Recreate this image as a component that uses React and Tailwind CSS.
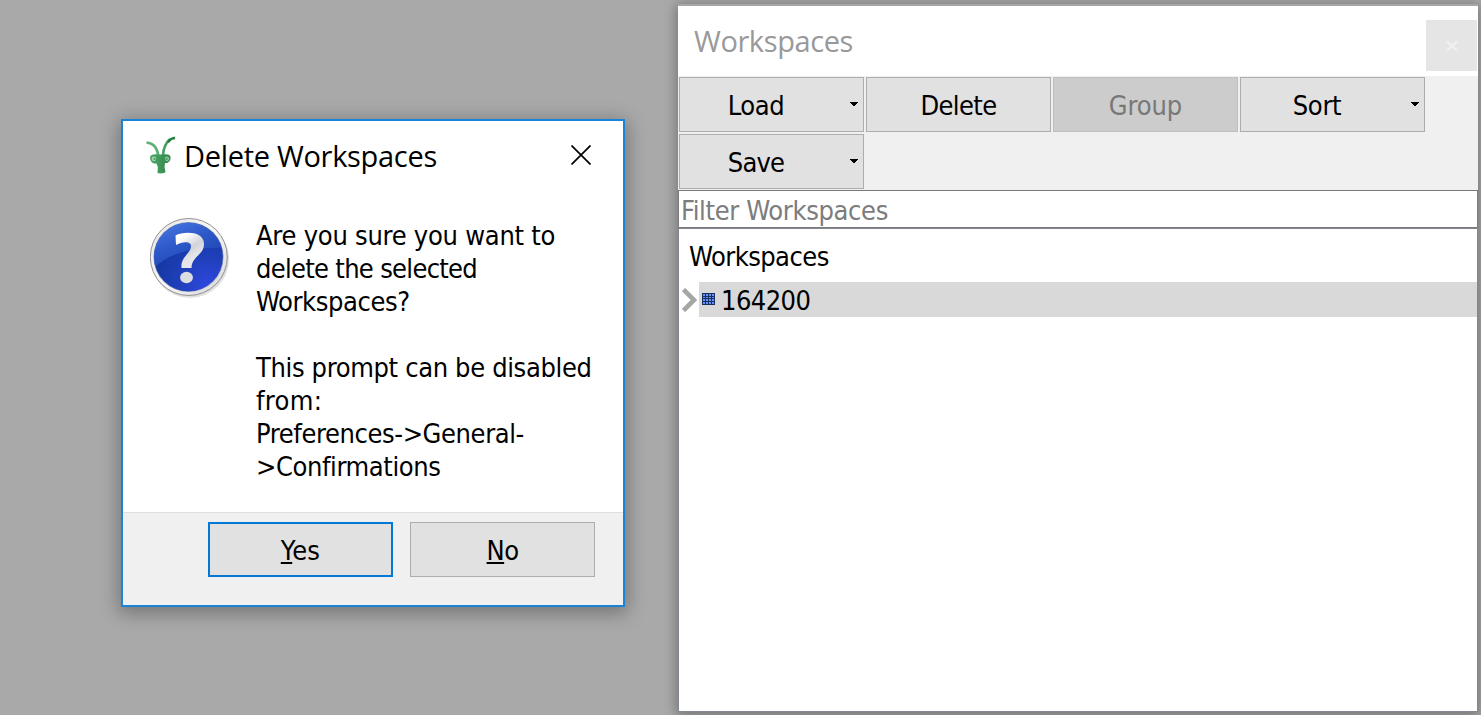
function MantisLogo() {
  return (
    <svg width="30" height="38" viewBox="0 0 30 38" className="shrink-0">
      <defs>
        <linearGradient id="mantis" x1="0" y1="0" x2="1" y2="0">
          <stop offset="0" stopColor="#4fa866" />
          <stop offset="1" stopColor="#2f8549" />
        </linearGradient>
      </defs>
      <path d="M0.500 6.500C7 7 11 11.500 12.300 19" fill="none" stroke="#5bb076" strokeWidth="2.600" />
      <path d="M17 19C17.500 12 19.500 7 24 3" fill="none" stroke="#47a060" strokeWidth="2.600" />
      <path d="M21 6C23 2.300 26.500 0 29.300 0.800L28.500 3.700C26.500 3 25 4.200 23 7Z" fill="#1f7a3b" />
      <path
        d="M4 21C5 18 9 18 12 18.500H17C20 18 24 18 24.500 21C25 25 22 27.500 19 27L18.500 31L19.500 36C17 38 13 37.500 11.500 37L11.800 31L10.500 27.500C7 28 4 26 4 21Z"
        fill="url(#mantis)"
      />
      <ellipse cx="8" cy="22.800" rx="2.300" ry="2.400" fill="#a3d2af" />
      <ellipse cx="21" cy="22.800" rx="2.200" ry="2.400" fill="#8fc59e" />
      <circle cx="8.600" cy="23" r="1" fill="#3f9459" />
      <circle cx="20.600" cy="23" r="1" fill="#3f9459" />
    </svg>
  );
}

function QuestionIcon() {
  return (
    <svg width="80" height="82" viewBox="0 0 80 82" className="shrink-0">
      <defs>
        <linearGradient id="ring" x1="0" y1="0" x2="1" y2="1">
          <stop offset="0" stopColor="#e4e4e4" />
          <stop offset="0.5" stopColor="#f8f8f8" />
          <stop offset="1" stopColor="#d4d4d6" />
        </linearGradient>
        <radialGradient id="ball" cx="0.8" cy="0.95" r="0.95">
          <stop offset="0" stopColor="#3048e0" />
          <stop offset="0.45" stopColor="#2040bc" />
          <stop offset="1" stopColor="#12359a" />
        </radialGradient>
        <linearGradient id="gloss" x1="0.05" y1="0" x2="0.6" y2="1">
          <stop offset="0" stopColor="#6094ff" />
          <stop offset="0.5" stopColor="#3361d2" />
          <stop offset="1" stopColor="#1a40a8" />
        </linearGradient>
        <linearGradient id="mark" x1="0" y1="0" x2="0.5" y2="1">
          <stop offset="0.2" stopColor="#ffffff" />
          <stop offset="0.55" stopColor="#d2d2da" />
          <stop offset="0.8" stopColor="#e6e6ea" />
        </linearGradient>
        <clipPath id="ballClip">
          <circle cx="38.500" cy="39" r="34.500" />
        </clipPath>
      </defs>
      <circle cx="40" cy="41" r="39" fill="#000" opacity="0.12" />
      <circle cx="38.800" cy="39" r="38.500" fill="url(#ring)" stroke="#929292" strokeWidth="1" />
      <circle cx="38.500" cy="39" r="35" fill="#8492b8" />
      <circle cx="38.500" cy="39" r="34.300" fill="url(#ball)" />
      <path d="M0 55C12 38 38 28 76 30V0H0Z" fill="url(#gloss)" opacity="0.8" clipPath="url(#ballClip)" />
      <path
        d="M25.500 17.500C33 13.500 54 12.500 54 26C54 37 41.500 38.500 41.500 50H31.500C30.500 38 41 36 41 28C41 22.500 32 23.500 26 27Z"
        fill="url(#mark)"
      />
      <ellipse cx="36.500" cy="59.500" rx="6.400" ry="5.800" fill="#dcdce2" />
    </svg>
  );
}

function ToolButton({ label, menu, disabled, track }) {
  return (
    <div
      className={
        "flex h-[55px] w-[185px] items-center border " +
        (disabled
          ? "border-[#bfbfbf] bg-[#cccccc] text-[#787878]"
          : "border-[#adadad] bg-[#e1e1e1] text-black")
      }
    >
      <span className={"grow pt-[3px] text-center " + track}>{label}</span>
      {menu && (
        <span className="flex w-[31px] shrink-0 justify-center pl-[13px]">
          <svg width="8" height="5" viewBox="0 0 8 5" shapeRendering="crispEdges">
            <path d="M0 0H8V1H7V2H6V3H5V4H3V3H2V2H1V1H0Z" />
          </svg>
        </span>
      )}
    </div>
  );
}

function WorkspacesPanel() {
  return (
    <section className="absolute left-[678px] top-1 flex h-[708px] w-[800px] flex-col border-t-2 border-[#a6a6a6] bg-white shadow-[0_2px_12px_2px_rgba(0,0,0,0.3)]">
      <header className="flex h-[70px] shrink-0 items-start justify-between pl-4 pr-px">
        <h2 className="pt-[14px] font-['Open_Sans',sans-serif] text-[29px] leading-[42px] tracking-[-0.4px] text-[#999999]">
          Workspaces
        </h2>
        <div className="mt-[14px] flex size-[51px] items-center justify-center bg-[#e5e5e5]">
          <svg width="12" height="10" viewBox="0 0 12 10">
            <path d="M1 0.500L11 9.500M11 0.500L1 9.500" stroke="#f0f0f0" strokeWidth="2.400" />
          </svg>
        </div>
      </header>
      <div className="flex h-[114px] shrink-0 flex-wrap content-start gap-0.5 bg-[#f0f0f0] pl-px pt-px">
        <ToolButton label="Load" menu track="tracking-[-0.4px]" />
        <ToolButton label="Delete" track="tracking-[-0.6px]" />
        <ToolButton label="Group" disabled track="tracking-[-0.1px]" />
        <ToolButton label="Sort" menu track="tracking-[-0.3px]" />
        <ToolButton label="Save" menu track="tracking-[-0.8px]" />
      </div>
      <div className="h-[38px] shrink-0 border border-[#7a7a7a] pl-0.5 leading-[39px] tracking-[-0.35px] text-[#7c7c7c]">
        Filter Workspaces
      </div>
      <div className="grow border border-[#828790]">
        <div className="h-[53px] pl-[10px] pt-[9px] leading-[37px] tracking-[-0.55px]">Workspaces</div>
        <div className="flex h-[35px] items-stretch">
          <div className="flex w-5 items-center pl-[3px]">
            <svg width="15" height="24" viewBox="0 0 15 24">
              <path d="M1.500 1.500L12 12L1.500 22.500" fill="none" stroke="#a6a6a6" strokeWidth="4.600" />
            </svg>
          </div>
          <div className="flex grow items-center bg-[#d9d9d9] pl-[3px]">
            <svg width="13" height="12" viewBox="0 0 13 12" shapeRendering="crispEdges" className="mb-0.5">
              <rect width="13" height="12" fill="#17305c" />
              <path d="M1 1h2v2h-2zM4 1h2v2h-2zM7 1h2v2h-2zM10 1h2v2h-2zM1 4h2v1h-2zM4 4h2v1h-2zM7 4h2v1h-2zM10 4h2v1h-2zM1 6h2v2h-2zM4 6h2v2h-2zM7 6h2v2h-2zM10 6h2v2h-2zM1 9h2v2h-2zM4 9h2v2h-2zM7 9h2v2h-2zM10 9h2v2h-2z" fill="#6a90fa" />
            </svg>
            <span className="pl-1.5 pt-[3px] tracking-[-0.55px]">164200</span>
          </div>
        </div>
      </div>
    </section>
  );
}

function DeleteDialog() {
  return (
    <section className="absolute left-[121px] top-[119px] flex h-[488px] w-[504px] flex-col border-2 border-[#1883d7] bg-white shadow-[0_4px_18px_2px_rgba(0,0,0,0.32)]">
      <header className="flex h-[70px] shrink-0 items-center pl-[23px] pr-8">
        <div className="pb-0.5">
          <MantisLogo />
        </div>
        <h1 className="grow pl-2 font-['Open_Sans',sans-serif] text-[29px] leading-[42px] tracking-[-0.3px] text-black">
          Delete Workspaces
        </h1>
        <svg width="20" height="20" viewBox="0 0 20 20" fill="none" stroke="#000" strokeWidth="1.700" className="mb-0.5">
          <path d="M0.500 0.500L19.500 19.500M19.500 0.500L0.500 19.500" />
        </svg>
      </header>
      <div className="flex grow items-start pl-[27px] pt-[27px]">
        <QuestionIcon />
        <div className="flex flex-col whitespace-nowrap pl-[26px] pt-px leading-[33px]">
          <span className="tracking-[-0.25px]">Are you sure you want to</span>
          <span className="tracking-[-0.7px]">delete the selected</span>
          <span className="tracking-[-0.4px]">Workspaces?</span>
          <span className="h-[33px]" />
          <span className="tracking-[-0.35px]">This prompt can be disabled</span>
          <span className="tracking-[0.3px]">from:</span>
          <span className="tracking-[-0.4px]">Preferences-&gt;General-</span>
          <span className="tracking-[-0.4px]">&gt;Confirmations</span>
        </div>
      </div>
      <footer className="flex h-[93px] shrink-0 justify-end gap-[17px] border-t border-[#dfdfdf] bg-[#f0f0f0] pr-7 pt-[9px]">
        <button className="h-[55px] w-[185px] border-2 border-[#0078d7] bg-[#e1e1e1] pt-[3px] tracking-[0.2px]">
          <span className="underline decoration-2 underline-offset-2">Y</span>es
        </button>
        <button className="h-[55px] w-[185px] border border-[#adadad] bg-[#e1e1e1] pt-[3px] tracking-[-0.6px]">
          <span className="underline decoration-2 underline-offset-2">N</span>o
        </button>
      </footer>
    </section>
  );
}

export default function App() {
  return (
    <main className="relative h-[715px] w-[1481px] overflow-hidden bg-[#a9a9a9] font-['DejaVu_Sans_Condensed','DejaVu_Sans',sans-serif] text-[27px] text-black">
      <WorkspacesPanel />
      <DeleteDialog />
    </main>
  );
}
